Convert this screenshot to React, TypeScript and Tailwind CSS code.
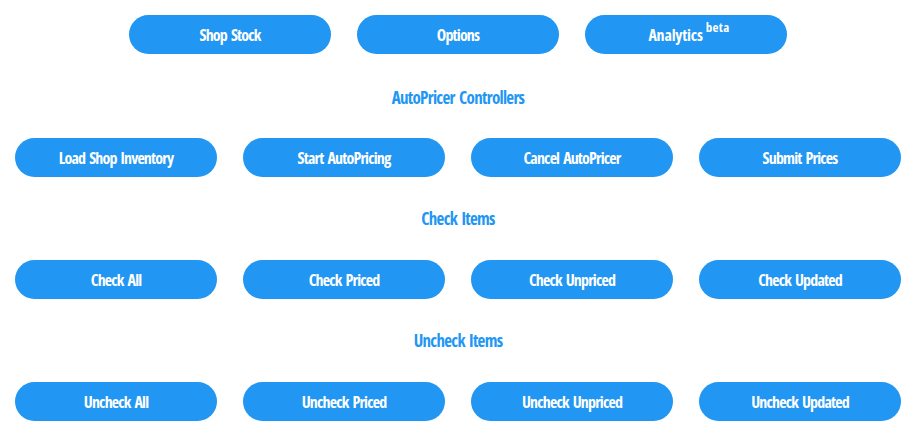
import React from "react";

const font = { fontFamily: '"Open Sans", "Liberation Sans", sans-serif' };

function Btn({ children }: { children: React.ReactNode }) {
  return (
    <button className="w-[202px] h-[39px] rounded-full bg-[#2196f3] text-white font-bold font-stretch-condensed text-[16px] tracking-[-0.85px] [word-spacing:2px] flex items-center justify-center">
      {children}
    </button>
  );
}

function Heading({ children, className }: { children: React.ReactNode; className: string }) {
  return (
    <div className={`h-[20px] leading-[20px] text-center text-[#2196f3] font-bold font-stretch-condensed text-[17px] tracking-[-0.7px] [word-spacing:2px] ${className}`}>
      {children}
    </div>
  );
}

function Row({ items }: { items: string[] }) {
  return (
    <div className="flex justify-center gap-[26px]">
      {items.map((t) => (
        <Btn key={t}>{t}</Btn>
      ))}
    </div>
  );
}

export default function App() {
  return (
    <div className="w-[916px] h-[438px] bg-white pt-[15px]" style={font}>
      <div className="flex justify-center gap-[26px]">
        <Btn>Shop Stock</Btn>
        <Btn>Options</Btn>
        <Btn>
          <span className="tracking-[-0.2px] pl-[6px]">Analytics</span>
          <span className="text-[13px] ml-[3px] relative -top-[7px] tracking-[0.3px]">beta</span>
        </Btn>
      </div>
      <Heading className="mt-[34px] mb-[30px]">AutoPricer Controllers</Heading>
      <Row items={["Load Shop Inventory", "Start AutoPricing", "Cancel AutoPricer", "Submit Prices"]} />
      <Heading className="mt-[32px] mb-[31px]">Check Items</Heading>
      <Row items={["Check All", "Check Priced", "Check Unpriced", "Check Updated"]} />
      <Heading className="mt-[32px] mb-[31px]">Uncheck Items</Heading>
      <Row items={["Uncheck All", "Uncheck Priced", "Uncheck Unpriced", "Uncheck Updated"]} />
    </div>
  );
}
